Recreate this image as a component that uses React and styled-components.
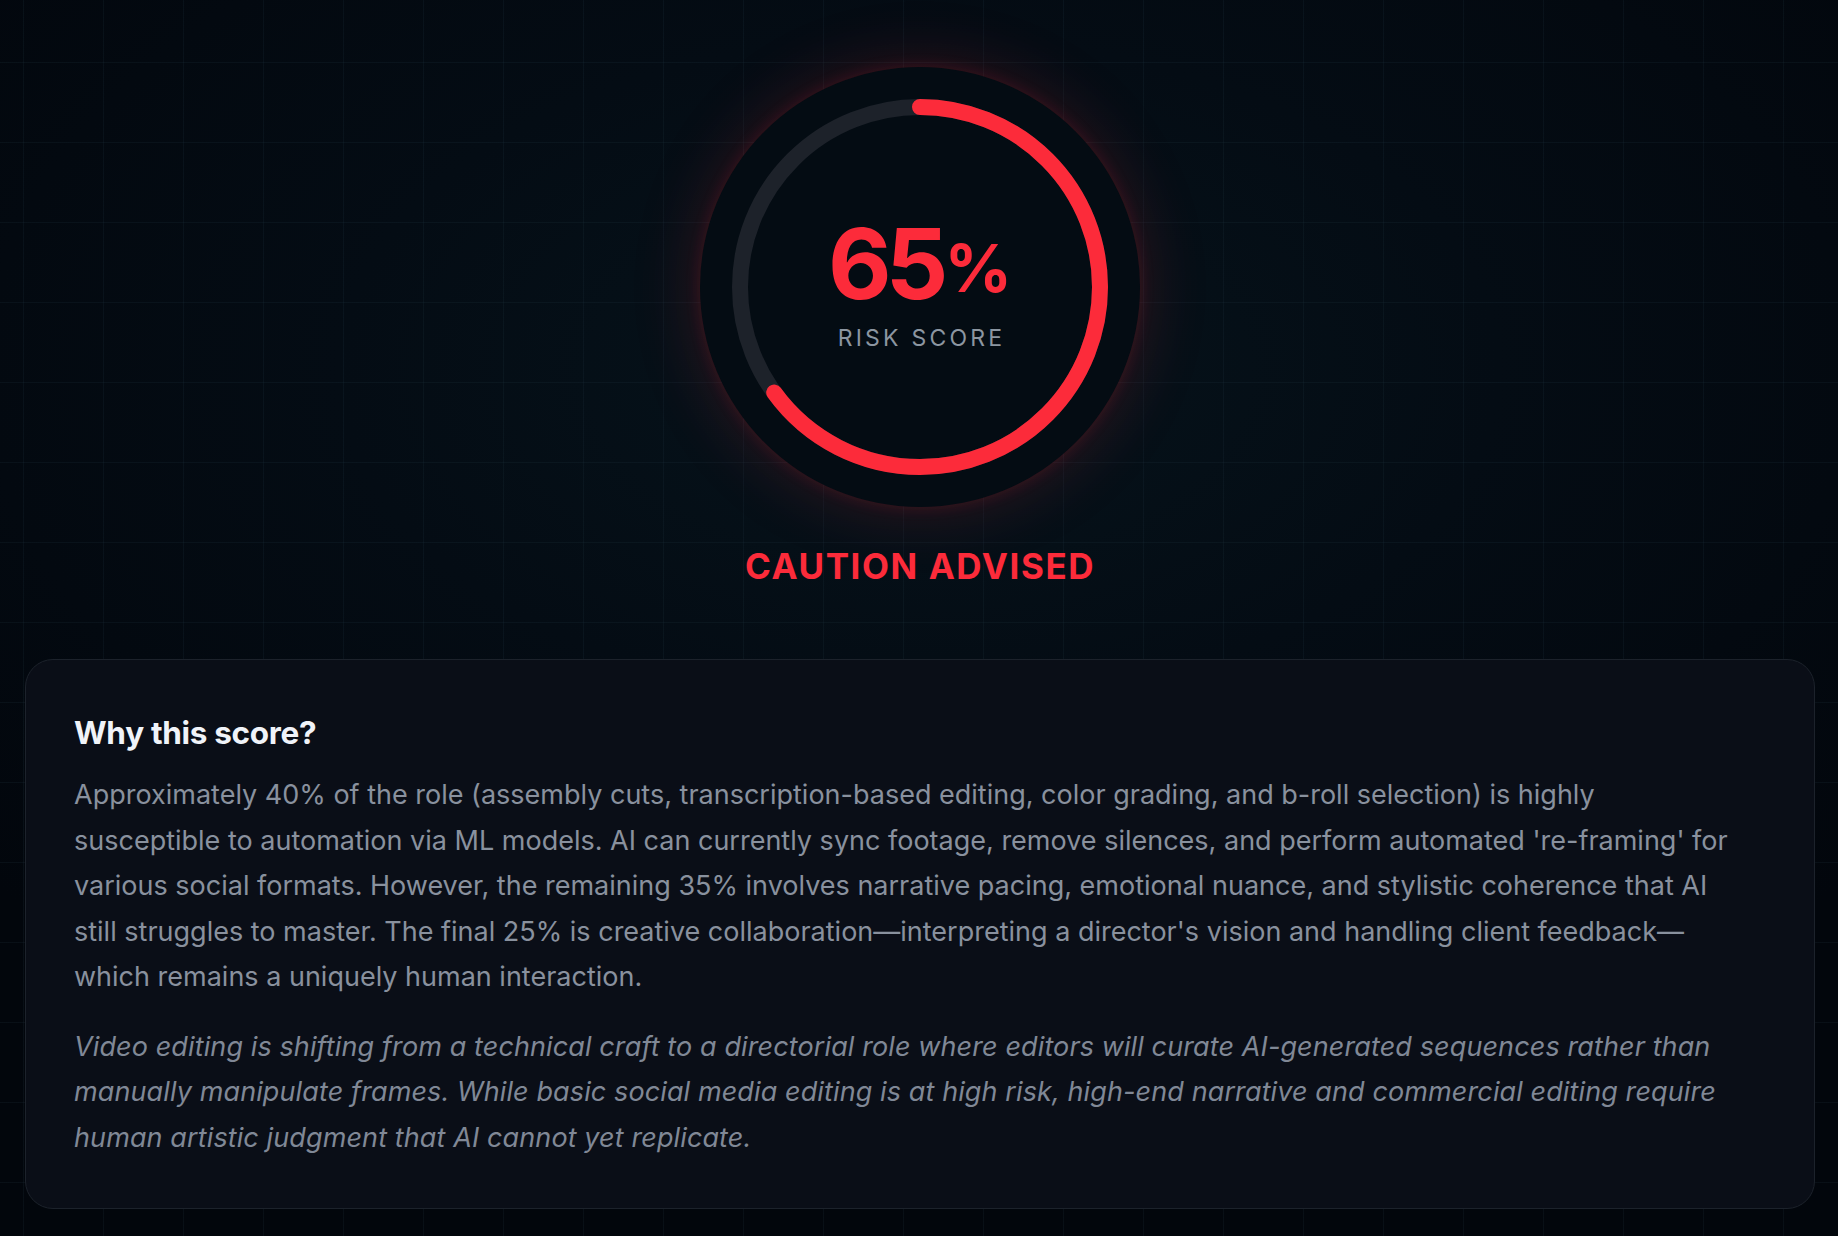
import React from "react";
import styled, { createGlobalStyle } from "styled-components";

const GlobalStyle = createGlobalStyle`
  html, body {
    margin: 0;
    padding: 0;
    background: #03080e;
  }
  body {
    font-family: Inter, "Noto Sans", "Liberation Sans", sans-serif;
    -webkit-font-smoothing: antialiased;
  }
  * {
    box-sizing: border-box;
  }
`;

const RED = "#fc2b3a";

const Page = styled.main`
  min-height: 1236px;
  padding: 67px 23px 28px 25px;
  display: flex;
  flex-direction: column;
  align-items: center;
  background-color: #03080e;
  background-image:
    linear-gradient(rgba(38, 62, 74, 0.17) 1px, transparent 1px),
    linear-gradient(90deg, rgba(38, 62, 74, 0.17) 1px, transparent 1px),
    radial-gradient(ellipse 70% 60% at 50% 30%, #06131b 0%, #040c14 45%, #02060c 100%);
  background-size: 80px 80px, 80px 80px, 100% 100%;
  background-position: 23px 62px, 23px 62px, 0 0;
`;

const Gauge = styled.div`
  width: 440px;
  height: 440px;
  border-radius: 50%;
  background: #040c13;
  box-shadow:
    0 0 70px rgba(252, 43, 58, 0.2),
    0 0 16px rgba(252, 43, 58, 0.14);
  display: grid;
  place-items: center;

  & > * {
    grid-area: 1 / 1;
  }
`;

const Ring = styled.svg`
  width: 440px;
  height: 440px;
  transform: rotate(-90deg);
`;

const Readout = styled.div`
  display: flex;
  flex-direction: column;
  align-items: center;
  padding-bottom: 8px;
`;

const Score = styled.div`
  font-size: 98px;
  font-weight: 700;
  line-height: 1;
  letter-spacing: -0.06em;
  color: ${RED};
  white-space: nowrap;
`;

const Percent = styled.span`
  font-size: 0.68em;
  letter-spacing: 0;
  margin-left: 2px;
  vertical-align: 0.1em;
`;

const ScoreLabel = styled.div`
  margin-top: 11px;
  font-size: 23px;
  font-weight: 400;
  letter-spacing: 0.14em;
  color: #8c96a1;
  margin-right: -3px;
`;

const Verdict = styled.h2`
  margin: 38px 0 0;
  font-size: 35px;
  line-height: 42px;
  font-weight: 700;
  letter-spacing: 0.045em;
  color: ${RED};
`;

const Card = styled.section`
  width: 100%;
  margin-top: 72px;
  padding: 50px 67px 48px 48px;
  border-radius: 28px;
  border: 1.5px solid #1c222b;
  background: #0a0e17;
`;

const CardTitle = styled.h3`
  margin: 0 0 17px;
  font-size: 31.5px;
  line-height: 45px;
  font-weight: 700;
  letter-spacing: -0.01em;
  color: #f0f3f9;
`;

const Paragraph = styled.p`
  margin: 0;
  font-size: 27px;
  line-height: 45.5px;
  color: ${(p) => (p.$muted ? "#808896" : "#89919e")};
  font-style: ${(p) => (p.$muted ? "italic" : "normal")};
  letter-spacing: ${(p) => (p.$muted ? "0.004em" : "0")};

  & + & {
    margin-top: 24px;
  }
`;

const RADIUS = 180;
const CIRC = 2 * Math.PI * RADIUS;

function RiskGauge({ value }) {
  const filled = (CIRC * value) / 100;
  return (
    <Gauge>
      <Ring viewBox="0 0 440 440">
        <circle cx="220" cy="220" r={RADIUS} fill="none" stroke="#1d222a" strokeWidth="16" />
        <circle
          cx="220"
          cy="220"
          r={RADIUS}
          fill="none"
          stroke={RED}
          strokeWidth="16"
          strokeLinecap="round"
          strokeDasharray={`${filled} ${CIRC}`}
        />
      </Ring>
      <Readout>
        <Score>
          {value}
          <Percent>%</Percent>
        </Score>
        <ScoreLabel>RISK SCORE</ScoreLabel>
      </Readout>
    </Gauge>
  );
}

export default function App() {
  return (
    <>
      <GlobalStyle />
      <Page>
        <RiskGauge value={65} />
        <Verdict>CAUTION ADVISED</Verdict>

        <Card>
          <CardTitle>Why this score?</CardTitle>
          <Paragraph>
            Approximately 40% of the role (assembly cuts, transcription-based editing, color grading, and
            b-roll selection) is highly susceptible to automation via ML models. AI can currently sync
            footage, remove silences, and perform automated 're-framing' for various social formats.
            However, the remaining 35% involves narrative pacing, emotional nuance, and stylistic coherence
            that AI still struggles to master. The final 25% is creative collaboration—interpreting a
            director's vision and handling client feedback—which remains a uniquely human interaction.
          </Paragraph>
          <Paragraph $muted>
            Video editing is shifting from a technical craft to a directorial role where editors will
            curate AI-generated sequences rather than manually manipulate frames. While basic social media
            editing is at high risk, high-end narrative and commercial editing require human artistic
            judgment that AI cannot yet replicate.
          </Paragraph>
        </Card>
      </Page>
    </>
  );
}
